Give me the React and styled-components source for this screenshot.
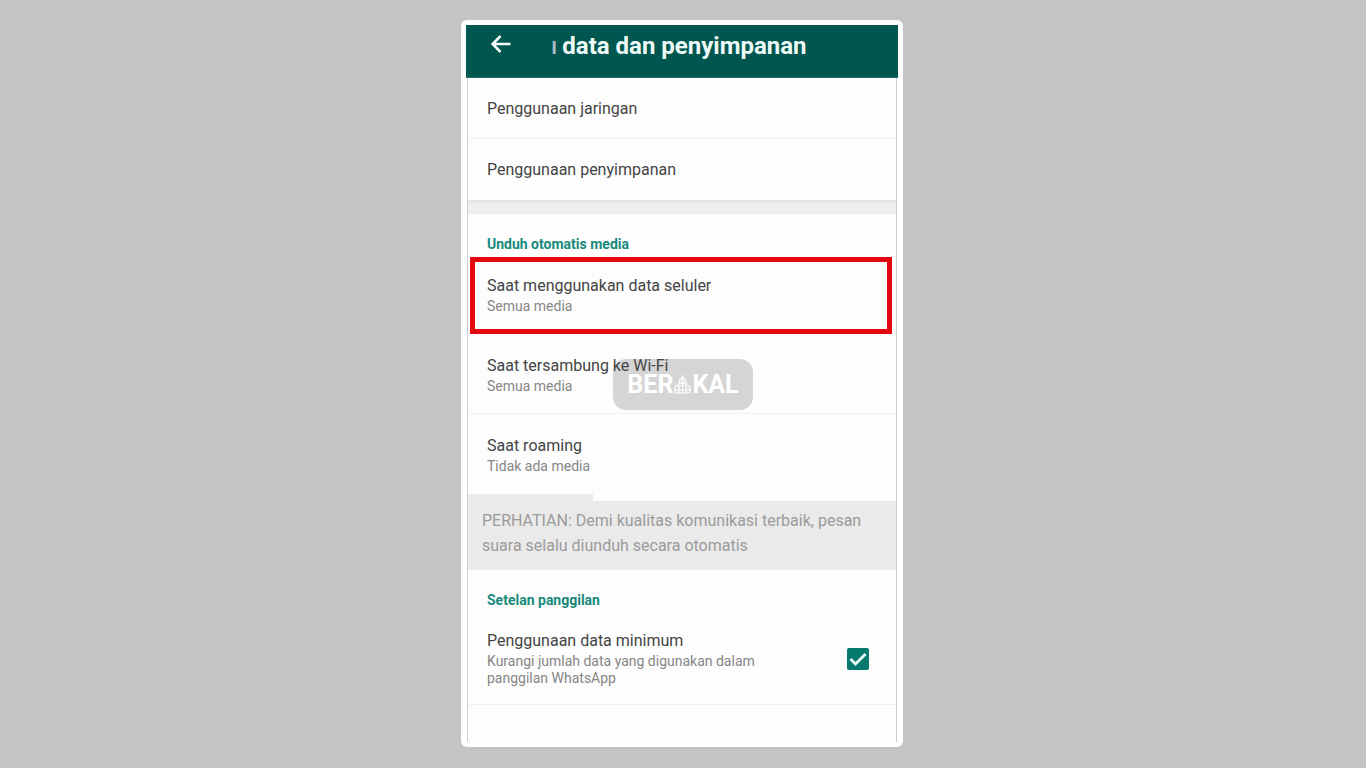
import React from "react";
import styled, { createGlobalStyle, css } from "styled-components";

const GlobalStyle = createGlobalStyle`
  *, *::before, *::after { box-sizing: border-box; }
  body {
    margin: 0;
    background: #c4c4c4;
    font-family: Roboto, "Liberation Sans", sans-serif;
  }
  button { font: inherit; }
`;

const Page = styled.div`
  position: relative;
  display: flex;
  flex-direction: column;
  align-items: center;
  min-height: 100vh;
  padding: 20px 18px 20px 16px;
`;

const Phone = styled.main`
  width: 100%;
  max-width: 442px;
  padding: 5px;
  border-radius: 6px;
  background: #fff;
`;

const AppBar = styled.header`
  display: flex;
  align-items: center;
  height: 53px;
  padding: 0 24px 10px;
  background: #01564f;
  border-bottom: 1px solid #2c6f69;
`;

const BackButton = styled.button`
  display: flex;
  padding: 0 0 4px;
  border: 0;
  background: none;
  color: #f2fbfa;
`;

const Title = styled.h1`
  margin: 0 0 0 39px;
  font-size: 24px;
  line-height: 32px;
  font-weight: 700;
  color: #eefaf8;
  white-space: nowrap;
`;

const Faded = styled.span`
  margin-right: 5px;
  font-weight: 500;
  color: #a9b9c4;
`;

const Screen = styled.div`
  margin: 0 1px;
  padding-bottom: 37px;
  border: solid #cdcdcd;
  border-width: 0 1px;
  background: #fdfdfd;
`;

const Row = styled.button`
  display: block;
  width: 100%;
  padding: ${(p) => (p.$single ? "20px 19px 18px" : "21px 19px 18px")};
  border: 0;
  border-bottom: 1px solid ${(p) => (p.$divider ? "#f1f1f1" : "transparent")};
  background: none;
  text-align: left;
  ${(p) =>
    p.$highlighted &&
    css`
      width: auto;
      align-self: stretch;
      margin: 0 4px 0 2px;
      padding: 13px 12px 14px;
      border: 5px solid #e50710;
    `}
`;

const List = styled.div`
  display: flex;
  flex-direction: column;
`;

const RowTitle = styled.span`
  position: relative;
  z-index: 2;
  display: block;
  font-size: 16px;
  line-height: 22px;
  color: #444;
`;

const RowDetail = styled.span`
  display: block;
  margin-top: 1px;
  font-size: 14px;
  line-height: 17px;
  color: #868686;
`;

const Band = styled.div`
  height: 14px;
  border-top: 3px solid #e6e6e6;
  background: #efefef;
`;

const SectionTitle = styled.h2`
  margin: 0;
  padding: 21px 19px 4px;
  font-size: 14px;
  line-height: 18px;
  font-weight: 700;
  color: #168a7c;
`;

const NoticeTab = styled.div`
  width: 125px;
  height: 7px;
  background: #eaeaea;
`;

const Notice = styled.p`
  margin: 0;
  padding: 7px 14px 12px;
  font-size: 16px;
  line-height: 25px;
  color: #9b9b9b;
  background: #eaeaea;
`;

const CheckRow = styled.label`
  display: flex;
  align-items: center;
  justify-content: space-between;
  padding: 17px 27px 17px 19px;
  border-bottom: 1px solid #f1f1f1;
`;

const CheckText = styled.span`
  max-width: 300px;
`;

const CheckMark = styled.span`
  display: grid;

  & > * {
    grid-area: 1 / 1;
  }
  svg {
    pointer-events: none;
  }
`;

const CheckInput = styled.input`
  appearance: none;
  width: 22px;
  height: 22px;
  margin: 0;
  border-radius: 2px;
  background: #9a9a9a;
  &:checked {
    background: #077a70;
  }
`;

const Watermark = styled.div`
  position: absolute;
  inset: 0;
  z-index: 1;
  margin: auto;
  display: flex;
  align-items: center;
  justify-content: center;
  width: 140px;
  height: 51px;
  padding-top: 2px;
  border-radius: 13px;
  background: #d5d5d5;
  color: #fff;
  font-size: 25px;
  line-height: 18px;
  font-weight: 700;
  pointer-events: none;
`;

function SettingRow({ title, detail, ...rest }) {
  return (
    <Row type="button" $single={!detail} {...rest}>
      <RowTitle>{title}</RowTitle>
      {detail && <RowDetail>{detail}</RowDetail>}
    </Row>
  );
}

export default function App() {
  return (
    <>
      <GlobalStyle />
      <Page>
        <Phone>
          <AppBar>
            <BackButton type="button" aria-label="Kembali">
              <svg width="22" height="22" viewBox="0 0 22 22" fill="none" stroke="currentColor" strokeWidth="2.6">
                <path d="M20.500 11H3M10.500 3 2.700 11l7.800 8" />
              </svg>
            </BackButton>
            <Title>
              <Faded>ı</Faded>data dan penyimpanan
            </Title>
          </AppBar>
          <Screen>
            <List>
              <SettingRow title="Penggunaan jaringan" $divider />
              <SettingRow title="Penggunaan penyimpanan" />
            </List>
            <Band />
            <SectionTitle>Unduh otomatis media</SectionTitle>
            <List>
              <SettingRow title="Saat menggunakan data seluler" detail="Semua media" $highlighted />
              <SettingRow title="Saat tersambung ke Wi-Fi" detail="Semua media" $divider />
              <SettingRow title="Saat roaming" detail="Tidak ada media" />
            </List>
            <NoticeTab />
            <Notice>
              PERHATIAN: Demi kualitas komunikasi terbaik, pesan suara selalu diunduh secara otomatis
            </Notice>
            <SectionTitle>Setelan panggilan</SectionTitle>
            <CheckRow>
              <CheckText>
                <RowTitle>Penggunaan data minimum</RowTitle>
                <RowDetail>Kurangi jumlah data yang digunakan dalam panggilan WhatsApp</RowDetail>
              </CheckText>
              <CheckMark>
                <CheckInput type="checkbox" defaultChecked />
                <svg width="22" height="22" viewBox="0 0 22 22" fill="none" stroke="#e6faf8" strokeWidth="2.8">
                  <path d="m3.500 11 5 5L18.500 6" />
                </svg>
              </CheckMark>
            </CheckRow>
          </Screen>
        </Phone>
        <Watermark>
          <span>BER</span>
          <svg width="19" height="22" viewBox="0 0 19 22" fill="none" stroke="#fff" strokeWidth="1.2">
            <path d="M9.500 1v19M9.500 3 6 7v3l3.500-2L13 10V7zM6 10l-4 3v6h15v-6l-4-3M2 16h15M6 12v7M13 12v7M5 13l4.500-2 4.500 2" />
          </svg>
          <span>KAL</span>
        </Watermark>
      </Page>
    </>
  );
}
